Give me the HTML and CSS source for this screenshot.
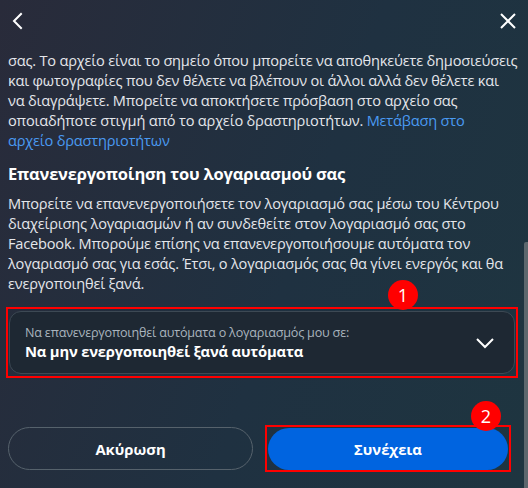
FILE: index.html
```html
<!DOCTYPE html>
<html lang="el">
<head>
    <meta charset="UTF-8">
    <meta name="viewport" content="width=device-width, initial-scale=1.0">
    <title>Επανενεργοποίηση λογαριασμού</title>
    <link rel="stylesheet" href="styles.css">
</head>
<body>
    <div class="dialog">
        <div class="header">
            <button class="icon-btn" aria-label="Πίσω">
                <svg width="16" height="18" viewBox="0 0 16 18"><path d="M11 2 L4 9 L11 16" fill="none" stroke="#fff" stroke-width="2" stroke-linecap="square"/></svg>
            </button>
            <button class="icon-btn" aria-label="Κλείσιμο">
                <svg width="18" height="18" viewBox="0 0 18 18"><path d="M2 2 L16 16 M16 2 L2 16" fill="none" stroke="#fff" stroke-width="2"/></svg>
            </button>
        </div>

        <div class="content">
            <p class="text">σας. Το αρχείο είναι το σημείο όπου μπορείτε να αποθηκεύετε δημοσιεύσεις και φωτογραφίες που δεν θέλετε να βλέπουν οι άλλοι αλλά δεν θέλετε και να διαγράψετε. Μπορείτε να αποκτήσετε πρόσβαση στο αρχείο σας οποιαδήποτε στιγμή από το αρχείο δραστηριοτήτων. <a href="#" class="link">Μετάβαση στο αρχείο&nbsp;δραστηριοτήτων</a></p>

            <h2 class="title">Επανενεργοποίηση του λογαριασμού σας</h2>
            <p class="text">Μπορείτε να επανενεργοποιήσετε τον λογαριασμό σας μέσω του Κέντρου διαχείρισης λογαριασμών ή αν συνδεθείτε στον λογαριασμό σας στο Facebook. Μπορούμε επίσης να επανενεργοποιήσουμε αυτόματα τον λογαριασμό σας για εσάς. Έτσι, ο λογαριασμός σας θα γίνει ενεργός και θα ενεργοποιηθεί ξανά.</p>

            <div class="marked select-wrap">
                <span class="badge">1</span>
                <div class="select">
                    <div class="select-text">
                        <span class="select-label">Να επανενεργοποιηθεί αυτόματα ο λογαριασμός μου σε:</span>
                        <span class="select-value">Να μην ενεργοποιηθεί ξανά αυτόματα</span>
                    </div>
                    <svg width="20" height="12" viewBox="0 0 20 12"><path d="M2 2 L10 10 L18 2" fill="none" stroke="#fff" stroke-width="2"/></svg>
                </div>
            </div>
        </div>

        <div class="footer">
            <button class="btn btn-outline">Ακύρωση</button>
            <div class="marked next-wrap">
                <span class="badge">2</span>
                <button class="btn btn-primary">Συνέχεια</button>
            </div>
        </div>

        <div class="scroll-thumb"></div>
    </div>
</body>
</html>
```

FILE: styles.css
```css
* {
    margin: 0;
    padding: 0;
    box-sizing: border-box;
    font-family: 'Open Sans', 'Noto Sans', sans-serif;
}

body {
    width: 528px;
    height: 488px;
    overflow: hidden;
}

.dialog {
    position: relative;
    width: 528px;
    height: 488px;
    display: flex;
    flex-direction: column;
    background: linear-gradient(110deg, #292b3a 0%, #1f3141 55%, #1e3540 100%);
    color: #e4e6eb;
}

.header {
    height: 50px;
    flex-shrink: 0;
    display: flex;
    justify-content: space-between;
    align-items: flex-start;
    padding: 11px 10px 0 8px;
}

.icon-btn {
    background: none;
    border: none;
    width: 20px;
    height: 20px;
    display: flex;
    align-items: center;
    justify-content: center;
    cursor: pointer;
}

.content {
    flex: 1;
    overflow: hidden;
    padding: 0 10px 0 8px;
}

.text {
    font-size: 14.6px;
    line-height: 20px;
    letter-spacing: -0.2px;
}

.link {
    color: #4a9af2;
    text-decoration: none;
}

.title {
    font-size: 16.5px;
    line-height: 22px;
    font-weight: 700;
    color: #fff;
    margin-top: 13px;
    margin-bottom: 8px;
    letter-spacing: -0.2px;
}

.marked {
    position: relative;
    border: 2px solid #f00;
}

.badge {
    position: absolute;
    width: 30px;
    height: 30px;
    border-radius: 50%;
    background: #f00;
    color: #fff;
    font-size: 18px;
    line-height: 30px;
    text-align: center;
    z-index: 2;
}

.select-wrap {
    margin: 14px 0 0 -2px;
    padding: 2px 1px;
}

.select-wrap .badge {
    top: -29px;
    right: 98px;
}

.select {
    height: 63px;
    border: 1px solid #3d4954;
    border-radius: 12px;
    background: #1e2833;
    display: flex;
    align-items: center;
    justify-content: space-between;
    padding: 0 19px 0 15px;
}

.select-text {
    display: flex;
    flex-direction: column;
}

.select-label {
    font-size: 12.6px;
    line-height: 17px;
    color: #a9b4be;
    letter-spacing: -0.2px;
}

.select-value {
    font-size: 14.8px;
    line-height: 20px;
    font-weight: 700;
    color: #fff;
    letter-spacing: -0.2px;
}

.footer {
    height: 71px;
    flex-shrink: 0;
    display: flex;
    gap: 12px;
    padding: 10px 17px 0 8px;
}

.btn {
    height: 43px;
    border-radius: 22px;
    font-size: 14.8px;
    font-weight: 700;
    color: #fff;
    cursor: pointer;
}

.btn-outline {
    width: 245px;
    background: none;
    border: 1px solid #56626c;
}

.next-wrap {
    flex: 1;
    padding: 1px 1px 0 1px;
    height: 47px;
    margin-top: -2px;
}

.next-wrap .badge {
    top: -26px;
    right: 8px;
}

.btn-primary {
    width: 100%;
    height: 42px;
    background: #0064e0;
    border: none;
}

.scroll-thumb {
    position: absolute;
    right: 0;
    top: 242px;
    width: 4px;
    height: 246px;
    background: #5c676d;
    border-radius: 2px 0 0 0;
}
```
